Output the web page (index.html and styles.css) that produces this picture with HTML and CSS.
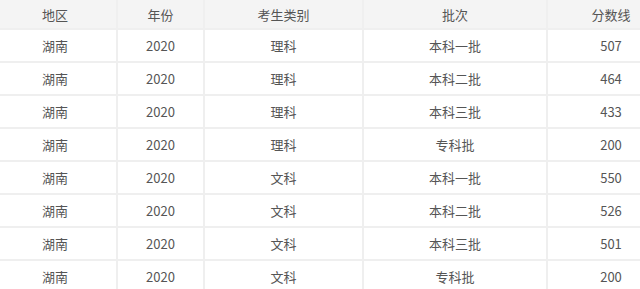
FILE: index.html
```html
<html>
<head>
   <meta charset="UTF-8">
   <title>分数线</title>

   <link rel="stylesheet" href="styles.css">
</head>
<body>

	<div class="table_box">
		<table class="score_table">
			<colgroup>
				<col class="c_area">
				<col class="c_year">
				<col class="c_type">
				<col class="c_batch">
				<col class="c_score">
			</colgroup>
			<thead>
				<tr>
					<th>地区</th>
					<th>年份</th>
					<th>考生类别</th>
					<th>批次</th>
					<th>分数线</th>
				</tr>
			</thead>
			<tbody>
				<tr><td>湖南</td><td>2020</td><td>理科</td><td>本科一批</td><td>507</td></tr>
				<tr><td>湖南</td><td>2020</td><td>理科</td><td>本科二批</td><td>464</td></tr>
				<tr><td>湖南</td><td>2020</td><td>理科</td><td>本科三批</td><td>433</td></tr>
				<tr><td>湖南</td><td>2020</td><td>理科</td><td>专科批</td><td>200</td></tr>
				<tr><td>湖南</td><td>2020</td><td>文科</td><td>本科一批</td><td>550</td></tr>
				<tr><td>湖南</td><td>2020</td><td>文科</td><td>本科二批</td><td>526</td></tr>
				<tr><td>湖南</td><td>2020</td><td>文科</td><td>本科三批</td><td>501</td></tr>
				<tr><td>湖南</td><td>2020</td><td>文科</td><td>专科批</td><td>200</td></tr>
			</tbody>
		</table>
	</div>

</body>
</html>
```

FILE: styles.css
```css
body{
	margin: 0;
	background: #ffffff;
}
.table_box{
	width: 640px;
	height: 289px;
	overflow: hidden;
}
.score_table{
	margin-left: -6px;
	width: 682px;
	table-layout: fixed;
	border-collapse: separate;
	border-spacing: 0;
	font-family: "Noto Sans CJK SC", "Noto Sans", sans-serif;
	font-size: 13px;
	color: #555555;
}
.c_area{ width: 124px; }
.c_year{ width: 87px; }
.c_type{ width: 159px; }
.c_batch{ width: 184px; }
.c_score{ width: 128px; }
.score_table th,
.score_table td{
	padding: 0;
	text-align: center;
	font-weight: normal;
	border-right: 2px solid #efefef;
	border-bottom: 2px solid #efefef;
	white-space: nowrap;
}
.score_table th{
	height: 30px;
	background: #f4f4f4;
}
.score_table td{
	height: 33px;
}
```
